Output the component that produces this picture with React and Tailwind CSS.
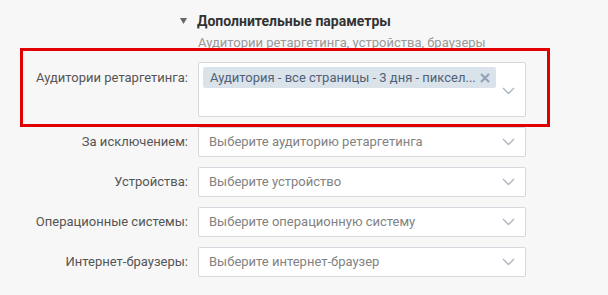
import React from 'react';

function Chevron() {
  return (
    <svg width="13" height="8" viewBox="0 0 13 8" className="shrink-0">
      <path d="M1 1l5.5 5.5L12 1" fill="none" stroke="#aab4bf" strokeWidth="1.3" />
    </svg>
  );
}

const rows = [
  { label: 'За исключением:', placeholder: 'Выберите аудиторию ретаргетинга' },
  { label: 'Устройства:', placeholder: 'Выберите устройство' },
  { label: 'Операционные системы:', placeholder: 'Выберите операционную систему' },
  { label: 'Интернет-браузеры:', placeholder: 'Выберите интернет-браузер' },
];

export default function App() {
  return (
    <div className="relative w-[608px] h-[295px] overflow-hidden bg-[#f7f7f7] font-['Roboto','Liberation_Sans',sans-serif] text-[13px]">
      <div className="pt-[12px] pl-[180px]">
        <div className="flex items-center h-[18px]">
          <svg width="7" height="6" viewBox="0 0 7 6" className="mr-[10px]">
            <path d="M0 0h7L3.5 6z" fill="#666" />
          </svg>
          <span className="text-[14px] font-bold text-[#333]">Дополнительные параметры</span>
        </div>
        <div className="mt-[5px] pl-[18px] h-[16px] leading-[16px] text-[#999]">
          Аудитории ретаргетинга, устройства, браузеры
        </div>
      </div>

      <div className="mt-[11px] flex flex-col gap-[10px]">
        <div className="flex">
          <div className="w-[188px] pt-[8px] text-right text-[#555] leading-[16px]">Аудитории ретаргетинга:</div>
          <div className="ml-[10px] w-[328px] h-[55px] bg-white border border-[#d3d9de] rounded-[2px] p-[4px] pr-[10px] flex">
            <div className="flex-1">
              <div className="flex items-center w-[293px] h-[21px] bg-[#dae2ea] rounded-[2px] pl-[7px] pr-[6px] text-[#4f6177]">
                <span className="flex-1 whitespace-nowrap overflow-hidden leading-[21px]">Аудитория - все страницы - 3 дня - пиксел...</span>
                <svg width="10" height="10" viewBox="0 0 10 10" className="ml-[3px] shrink-0">
                  <path d="M1 1l8 8M9 1l-8 8" stroke="#8fa1b4" strokeWidth="2" />
                </svg>
              </div>
            </div>
            <div className="self-center pt-[2px]">
              <Chevron />
            </div>
          </div>
        </div>

        {rows.map((r) => (
          <div key={r.label} className="flex items-center">
            <div className="w-[188px] text-right text-[#555]">{r.label}</div>
            <div className="ml-[10px] w-[328px] h-[30px] bg-white border border-[#d3d9de] rounded-[2px] pl-[10px] pr-[10px] flex items-center">
              <span className="flex-1 text-[#828282]">{r.placeholder}</span>
              <Chevron />
            </div>
          </div>
        ))}
      </div>

      <div className="absolute left-[20px] top-[48px] w-[530px] h-[79px] border-[3px] border-[#e10000]" />
    </div>
  );
}
